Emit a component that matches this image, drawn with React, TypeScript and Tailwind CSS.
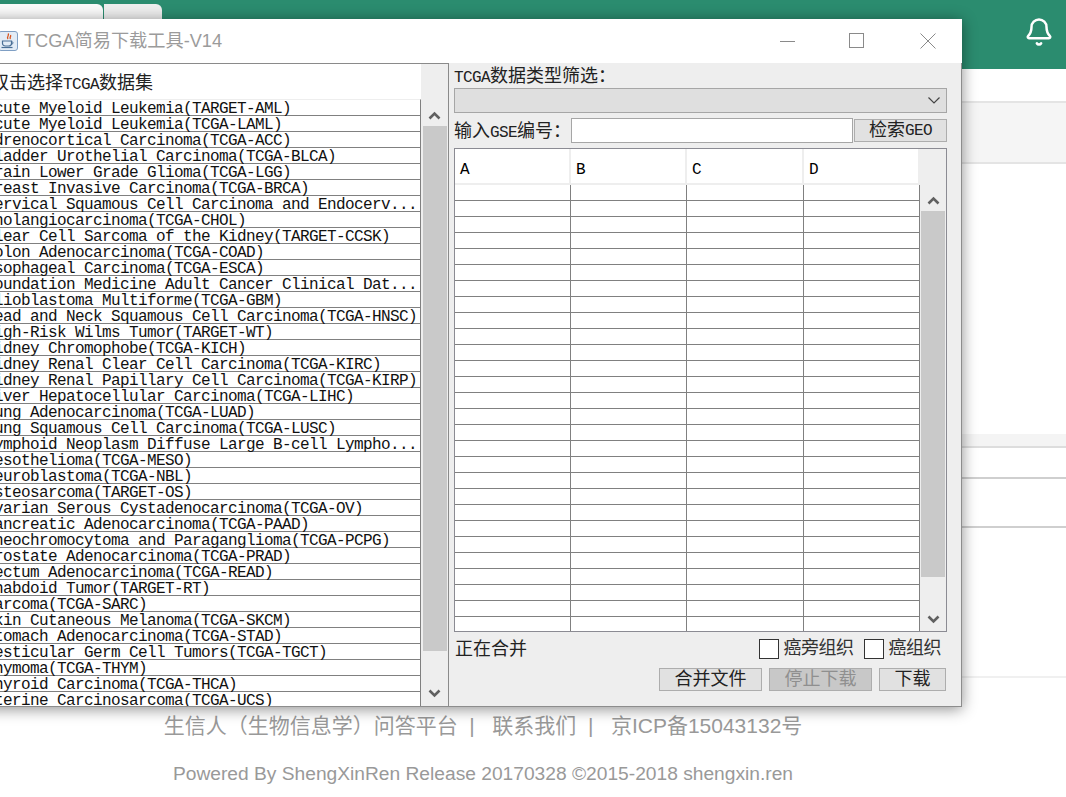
import { Bell } from "lucide-react";

const datasets = [
  "Acute Myeloid Leukemia(TARGET-AML)",
  "Acute Myeloid Leukemia(TCGA-LAML)",
  "Adrenocortical Carcinoma(TCGA-ACC)",
  "Bladder Urothelial Carcinoma(TCGA-BLCA)",
  "Brain Lower Grade Glioma(TCGA-LGG)",
  "Breast Invasive Carcinoma(TCGA-BRCA)",
  "Cervical Squamous Cell Carcinoma and Endocerv...",
  "Cholangiocarcinoma(TCGA-CHOL)",
  "Clear Cell Sarcoma of the Kidney(TARGET-CCSK)",
  "Colon Adenocarcinoma(TCGA-COAD)",
  "Esophageal Carcinoma(TCGA-ESCA)",
  "Foundation Medicine Adult Cancer Clinical Dat...",
  "Glioblastoma Multiforme(TCGA-GBM)",
  "Head and Neck Squamous Cell Carcinoma(TCGA-HNSC)",
  "High-Risk Wilms Tumor(TARGET-WT)",
  "Kidney Chromophobe(TCGA-KICH)",
  "Kidney Renal Clear Cell Carcinoma(TCGA-KIRC)",
  "Kidney Renal Papillary Cell Carcinoma(TCGA-KIRP)",
  "Liver Hepatocellular Carcinoma(TCGA-LIHC)",
  "Lung Adenocarcinoma(TCGA-LUAD)",
  "Lung Squamous Cell Carcinoma(TCGA-LUSC)",
  "Lymphoid Neoplasm Diffuse Large B-cell Lympho...",
  "Mesothelioma(TCGA-MESO)",
  "Neuroblastoma(TCGA-NBL)",
  "Osteosarcoma(TARGET-OS)",
  "Ovarian Serous Cystadenocarcinoma(TCGA-OV)",
  "Pancreatic Adenocarcinoma(TCGA-PAAD)",
  "Pheochromocytoma and Paraganglioma(TCGA-PCPG)",
  "Prostate Adenocarcinoma(TCGA-PRAD)",
  "Rectum Adenocarcinoma(TCGA-READ)",
  "Rhabdoid Tumor(TARGET-RT)",
  "Sarcoma(TCGA-SARC)",
  "Skin Cutaneous Melanoma(TCGA-SKCM)",
  "Stomach Adenocarcinoma(TCGA-STAD)",
  "Testicular Germ Cell Tumors(TCGA-TGCT)",
  "Thymoma(TCGA-THYM)",
  "Thyroid Carcinoma(TCGA-THCA)",
  "Uterine Carcinosarcoma(TCGA-UCS)",
];

const monoFont = "[font-family:'Liberation_Mono','Noto_Sans_CJK_SC',monospace]";

// Swing mixes a 9px wide latin face with 18px hanzi, so the two get their own sizes
function Label({ text }: { text: string }) {
  const parts = text.match(/[\x00-\x7f]+|[^\x00-\x7f]+/g) ?? [];
  return (
    <>
      {parts.map((p, i) =>
        /^[\x00-\x7f]/.test(p) ? (
          <span key={i} className="text-[16px] tracking-[-0.6px]">{p}</span>
        ) : (
          <span key={i} className="text-[18px]">{p}</span>
        ),
      )}
    </>
  );
}

function Chevron({ down = false }: { down?: boolean }) {
  return (
    <svg width="13" height="9" viewBox="0 0 13 9" className="block">
      <path
        d={down ? "M1.5 1.5 L6.5 6.5 L11.5 1.5" : "M1.5 7.5 L6.5 2.5 L11.5 7.5"}
        fill="none"
        stroke="#606060"
        strokeWidth="2.6"
      />
    </svg>
  );
}

function ScrollBar({ topGap, thumb, bottomGap }: { topGap: number; thumb: number; bottomGap: number }) {
  return (
    <div className="flex h-full w-full flex-col items-center bg-[#eeeeee]">
      <div className="flex w-full shrink-0 items-end justify-center pb-[6px]" style={{ height: topGap }}>
        <Chevron />
      </div>
      <div className="w-[24px] shrink-0 bg-[#c9c9c9]" style={{ height: thumb }} />
      <div className="flex w-full flex-1 items-end justify-center" style={{ paddingBottom: bottomGap }}>
        <Chevron down />
      </div>
    </div>
  );
}

function JavaIcon() {
  return (
    <svg width="20" height="20" viewBox="0 0 20 20" className="shrink-0">
      <rect x="0.5" y="0.5" width="19" height="19" rx="2.5" fill="#e3ecf6" stroke="#7f9fc4" />
      <path d="M10 2.5c2 2-2 3 0 5.5M12.5 4c1 1.5-1.5 2.5 0 4" fill="none" stroke="#d8541e" strokeWidth="1.3" />
      <path d="M4.5 10h9v2.5c0 1.5-1.5 2.5-3 2.5h-3c-1.5 0-3-1-3-2.5z" fill="none" stroke="#4a6f96" strokeWidth="1.2" />
      <path d="M13.5 10.5c2 0 2 3-0.5 3" fill="none" stroke="#4a6f96" strokeWidth="1" />
      <path d="M3.5 16.5h11" stroke="#4a6f96" strokeWidth="1.2" />
    </svg>
  );
}

function DataTable() {
  return (
    <div className="mt-[5px] flex h-[484px] w-[493px] border border-[#8b8b93] bg-[#eeeeee]">
      <div className="w-[465px] overflow-hidden">
        <div className="grid h-[36px] grid-cols-[116px_116px_117px_116px] bg-white">
          {["A", "B", "C", "D"].map((h) => (
            <div key={h} className="border-r-2 border-b-2 border-[#eeeeee] pl-[5px] pt-[12px] text-[16px] leading-[18px] text-black">
              {h}
            </div>
          ))}
        </div>
        <div className="h-[447px] overflow-hidden border-r border-[#808080] bg-white">
          {Array.from({ length: 28 }, (_, r) => (
            <div key={r} className="grid h-[16px] grid-cols-[116px_116px_117px_115px] border-b border-[#808080]">
              <div className="border-r border-[#808080]" />
              <div className="border-r border-[#808080]" />
              <div className="border-r border-[#808080]" />
              <div />
            </div>
          ))}
        </div>
      </div>
      <div className="flex-1">
        <ScrollBar topGap={62} thumb={366} bottomGap={7} />
      </div>
    </div>
  );
}

function ActionButton({ label, width, disabled = false }: { label: string; width: number; disabled?: boolean }) {
  return (
    <div
      className={`flex h-[23px] items-center justify-center border border-[#adadad] pt-[1px] text-[18px] leading-none ${
        disabled ? "bg-[#c8c8c8] text-[#8f8f8f]" : "bg-[#e1e1e1] text-[#222222]"
      }`}
      style={{ width }}
    >
      {label}
    </div>
  );
}

function CheckOption({ label }: { label: string }) {
  return (
    <div className="flex items-center gap-[5px]">
      <div className="size-[20px] border border-[#333333] bg-white" />
      <span className="text-[18px] leading-none tracking-[-0.5px] text-[#333333]">{label}</span>
    </div>
  );
}

function DownloadWindow() {
  return (
    <div className={`absolute top-[19px] left-[-30px] flex h-[688px] w-[992px] flex-col bg-[#eeeeee] text-[#222222] shadow-[0_2px_14px_rgba(0,0,0,0.45)] ${monoFont}`}>
      <div className="flex h-[44px] shrink-0 items-center bg-white pl-[28px] [font-family:'Liberation_Sans','Noto_Sans_CJK_SC',sans-serif]">
        <JavaIcon />
        <span className="ml-[6px] pt-[2px] text-[18.2px] text-[#9b9b9b]">TCGA简易下载工具-V14</span>
        <div className="ml-auto flex items-center">
          <div className="h-px w-[15px] bg-[#8a8a8a]" />
          <div className="mb-[2px] ml-[54px] size-[15px] border border-[#8a8a8a]" />
          <svg width="16" height="16" viewBox="0 0 16 16" className="mr-[26px] ml-[56px]">
            <path d="M0.5 0.5 L15.5 15.5 M15.5 0.5 L0.5 15.5" stroke="#8a8a8a" strokeWidth="1" />
          </svg>
        </div>
      </div>

      <div className="flex min-h-0 flex-1 border-r border-b border-[#8d8d8d]">
        <div className="flex w-[479px] shrink-0 border-t border-r border-[#8a8a8a]">
          <div className="flex w-[451px] shrink-0 flex-col overflow-hidden">
            <div className="h-[35px] shrink-0 bg-white pl-[21px] pt-[11px] leading-[18px] whitespace-nowrap">
              <Label text="双击选择TCGA数据集" />
            </div>
            <div className="flex-1 overflow-hidden border-t border-r border-t-[#eeeeee] border-r-[#808080] bg-white">
              {datasets.map((d) => (
                <div key={d} className="h-[16px] border-b border-[#808080] pl-[15px] text-[16px] leading-[18px] tracking-[-0.6px] whitespace-nowrap text-[#111111]">
                  {d}
                </div>
              ))}
            </div>
          </div>
          <div className="flex-1">
            <ScrollBar topGap={62} thumb={525} bottomGap={8} />
          </div>
        </div>

        <div className="flex-1 pl-[5px] pt-[1px]">
          <div className="h-[24px] pt-[4px] leading-[18px] whitespace-nowrap">
            <Label text="TCGA数据类型筛选：" />
          </div>
          <div className="flex h-[25px] w-[493px] items-center justify-end border border-[#a6a6a6] bg-[#dfdfdf] pr-[6px]">
            <svg width="12" height="7" viewBox="0 0 12 7">
              <path d="M0.5 0.5 L6 6 L11.5 0.5" fill="none" stroke="#444444" strokeWidth="1.2" />
            </svg>
          </div>
          <div className="mt-[5px] flex h-[25px] items-center">
            <div className="w-[117px] pt-[4px] leading-[18px] whitespace-nowrap">
              <Label text="输入GSE编号：" />
            </div>
            <div className="h-[25px] w-[282px] border border-[#a6a6a6] bg-white" />
            <div className="ml-[1px] flex h-[23px] w-[93px] items-center justify-center border border-[#adadad] bg-[#e1e1e1] pt-[1px] leading-none">
              <Label text="检索GEO" />
            </div>
          </div>
          <DataTable />
          <div className="mt-[7px] flex h-[20px] items-center pl-[1px] pr-[20px]">
            <span className="pt-[1px] text-[18px] leading-none">正在合并</span>
            <div className="ml-auto flex items-center gap-[10px]">
              <CheckOption label="癌旁组织" />
              <CheckOption label="癌组织" />
            </div>
          </div>
          <div className="mt-[9px] flex justify-end gap-[7px] pr-[15px]">
            <ActionButton label="合并文件" width={103} />
            <ActionButton label="停止下载" width={103} disabled />
            <ActionButton label="下载" width={67} />
          </div>
        </div>
      </div>
    </div>
  );
}

export default function App() {
  return (
    <div className="relative h-[797px] w-[1066px] overflow-hidden bg-white [font-family:'Liberation_Sans','Noto_Sans_CJK_SC',sans-serif]">
      <header className="flex h-[69px] items-start bg-[#2b8c6f] pt-[4px]">
        <div className="h-[16px] w-[103px] rounded-tr-[6px] bg-[#fafafa]" />
        <div className="ml-px h-[16px] w-[58px] rounded-tr-[6px] bg-[#eeeeee]" />
        <Bell className="mt-[13px] ml-auto mr-[12px] size-[30px] text-white" strokeWidth={2} />
      </header>

      <div className="h-[34px] border-b-2 border-[#e4e4e4]" />
      <div className="h-[61px] border-b-2 border-[#e4e4e4] bg-[#f5f5f5]" />
      <div className="h-[270px]" />
      <div className="h-[14px] border-b-2 border-[#dddddd] bg-[#f4f4f4]" />
      <div className="h-[31px] border-b-2 border-[#cfcfcf]" />
      <div className="h-[49px] border-b-2 border-[#cfcfcf]" />
      <div className="h-[150px] border-b-2 border-[#f0f0f0]" />

      <footer className="pt-[35px] text-[#999999]">
        <div className="flex justify-center pr-[100px] text-[21px] leading-[26px] whitespace-pre">
          <span>生信人（生物信息学）问答平台</span>
          <span>  |   联系我们  |   京ICP备15043132号</span>
        </div>
        <div className="mt-[24px] flex justify-center pr-[100px] text-[19.2px] leading-[22px]">
          Powered By ShengXinRen Release 20170328 ©2015-2018 shengxin.ren
        </div>
      </footer>

      <DownloadWindow />
    </div>
  );
}
